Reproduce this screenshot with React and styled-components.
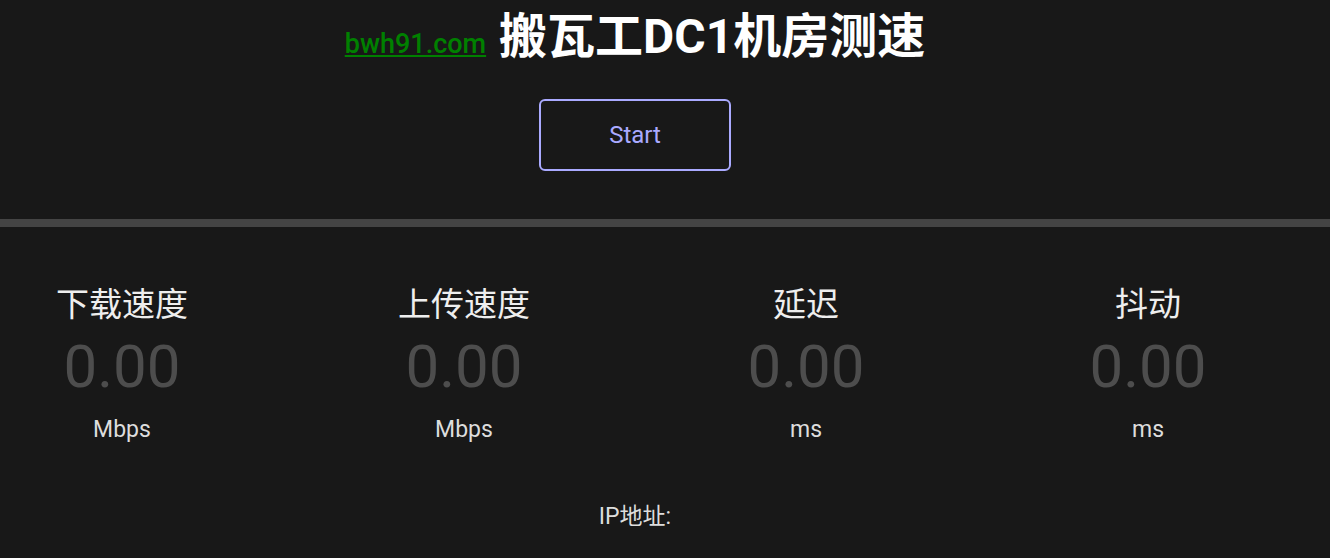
import React from "react";
import styled, { createGlobalStyle } from "styled-components";

const GlobalStyle = createGlobalStyle`
  html, body {
    margin: 0;
    padding: 0;
    background: #181818;
  }
  body {
    font-family: Roboto, "Noto Sans CJK SC", sans-serif;
    color: #eeeeee;
  }
`;

const Page = styled.div`
  min-height: 558px;
  background: #181818;
`;

const Content = styled.div`
  width: 1270px;
  display: flex;
  flex-direction: column;
  align-items: center;
`;

const Header = styled.header`
  width: 1270px;
  display: flex;
  flex-direction: column;
  align-items: center;
  padding-top: 8px;
`;

const Title = styled.h1`
  margin: 0;
  font-size: 48px;
  line-height: 58px;
  font-weight: 700;
  color: #ffffff;
  white-space: nowrap;
`;

const SiteLink = styled.a`
  font-size: 27px;
  font-weight: 500;
  color: #008000;
  text-decoration: underline;
  margin-right: 13px;
`;

const StartButton = styled.button`
  margin-top: 26px;
  width: 192px;
  height: 72px;
  border: 2px solid #aaaaff;
  border-radius: 6px;
  background: transparent;
  color: #aaaaff;
  font-family: Roboto, "Noto Sans CJK SC", sans-serif;
  font-size: 24px;
  cursor: pointer;
`;

const Divider = styled.hr`
  margin: 48px 0 0;
  border: none;
  height: 8px;
  width: 100%;
  background: #444444;
`;

const Stats = styled.div`
  display: grid;
  grid-template-columns: repeat(4, 244px);
  column-gap: 98px;
  margin-top: 58px;
`;

const Stat = styled.div`
  display: flex;
  flex-direction: column;
  align-items: center;
`;

const Label = styled.div`
  font-size: 33px;
  line-height: 40px;
  color: #eeeeee;
`;

const Value = styled.div`
  font-size: 60px;
  line-height: 70px;
  color: #4d4d4d;
  margin-top: 7px;
`;

const Unit = styled.div`
  font-size: 23px;
  line-height: 30px;
  color: #dddddd;
  margin-top: 13px;
`;

const IpLine = styled.div`
  margin-top: 57px;
  font-size: 23px;
  line-height: 30px;
  color: #dddddd;
`;

const stats = [
  { label: "下载速度", unit: "Mbps" },
  { label: "上传速度", unit: "Mbps" },
  { label: "延迟", unit: "ms" },
  { label: "抖动", unit: "ms" },
];

export default function App() {
  return (
    <Page>
      <GlobalStyle />
      <Header>
        <Title>
          <SiteLink href="#">bwh91.com</SiteLink>
          搬瓦工DC1机房测速
        </Title>
        <StartButton>Start</StartButton>
      </Header>
      <Divider />
      <Content>
        <Stats>
          {stats.map((s) => (
            <Stat key={s.label}>
              <Label>{s.label}</Label>
              <Value>0.00</Value>
              <Unit>{s.unit}</Unit>
            </Stat>
          ))}
        </Stats>
        <IpLine>IP地址:</IpLine>
      </Content>
    </Page>
  );
}
